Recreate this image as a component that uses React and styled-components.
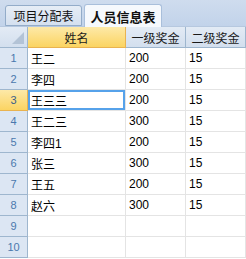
import styled, { createGlobalStyle } from 'styled-components';

const GlobalStyle = createGlobalStyle`
    html, body {
        margin: 0;
        padding: 0;
        background: #ffffff;
    }
    * {
        box-sizing: border-box;
    }
`;

const rows = [
    { name: '王二', a: '200', b: '15' },
    { name: '李四', a: '200', b: '15' },
    { name: '王三三', a: '200', b: '15' },
    { name: '王二三', a: '300', b: '15' },
    { name: '李四1', a: '200', b: '15' },
    { name: '张三', a: '300', b: '15' },
    { name: '王五', a: '200', b: '15' },
    { name: '赵六', a: '300', b: '15' },
    null,
    null,
];

const SELECTED_ROW = 2;

function App() {
    return (
        <>
            <GlobalStyle />
            <Wrapper>
                <TabBar>
                    <Tab>项目分配表</Tab>
                    <Tab $active>人员信息表</Tab>
                </TabBar>
                <Grid>
                    <Corner>
                        <svg width="12" height="12" viewBox="0 0 12 12">
                            <polygon points="12,0 12,12 0,12" fill="#b3c3d6" />
                        </svg>
                    </Corner>
                    <ColHeader $selected>姓名</ColHeader>
                    <ColHeader>一级奖金</ColHeader>
                    <ColHeader>二级奖金</ColHeader>

                    {rows.map((row, index) => (
                        <Row key={index}>
                            <RowHeader $selected={index === SELECTED_ROW}>{index + 1}</RowHeader>
                            <Cell $active={index === SELECTED_ROW}>{row ? row.name : ''}</Cell>
                            <Cell>{row ? row.a : ''}</Cell>
                            <Cell>{row ? row.b : ''}</Cell>
                        </Row>
                    ))}
                </Grid>
            </Wrapper>
        </>
    );
}

export default App;

const Wrapper = styled.div`
    width: 246px;
    height: 259px;
    overflow: hidden;
    font-family: "Liberation Sans", "Noto Sans CJK SC", sans-serif;
    background: #ffffff;
`;

const TabBar = styled.div`
    height: 27px;
    display: flex;
    align-items: flex-end;
    gap: 2px;
    padding-left: 5px;
    background: linear-gradient(#cfdcee, #c2d3ea);
    border-bottom: 1px solid #b6c8df;
`;

const Tab = styled.div`
    height: ${p => (p.$active ? '23px' : '21px')};
    width: ${p => (p.$active ? '78px' : '77px')};
    margin-bottom: ${p => (p.$active ? '-1px' : '0')};
    display: flex;
    align-items: center;
    justify-content: center;
    font-size: ${p => (p.$active ? '13px' : '12px')};
    font-weight: ${p => (p.$active ? 700 : 400)};
    color: #111;
    background: ${p => (p.$active ? '#f6f9fd' : 'linear-gradient(#e6edf6, #d4e0ef)')};
    border: 1px solid ${p => (p.$active ? '#a9bfdb' : '#93acc9')};
    border-bottom: ${p => (p.$active ? 'none' : '1px solid #93acc9')};
    border-radius: 3px 3px 0 0;
`;

const Grid = styled.div`
    display: grid;
    grid-template-columns: 28px 98px 60px 60px;
    grid-auto-rows: 21px;
`;

const Row = styled.div`
    display: contents;
`;

const Corner = styled.div`
    display: flex;
    align-items: flex-end;
    justify-content: flex-end;
    padding: 0 3px 3px 0;
    background: linear-gradient(#e3ebf5, #d3dfee);
    border-right: 1px solid #9eb6ce;
    border-bottom: 1px solid #9eb6ce;
`;

const ColHeader = styled.div`
    display: flex;
    align-items: center;
    justify-content: center;
    font-size: 12px;
    color: #1a1a1a;
    background: ${p => (p.$selected ? 'linear-gradient(#fde9a8, #fbd462)' : 'linear-gradient(#e3ebf5, #d3dfee)')};
    border-right: 1px solid ${p => (p.$selected ? '#e9b350' : '#9eb6ce')};
    border-bottom: 1px solid ${p => (p.$selected ? '#e9b350' : '#9eb6ce')};
`;

const RowHeader = styled.div`
    display: flex;
    align-items: center;
    justify-content: center;
    font-size: 11px;
    color: ${p => (p.$selected ? '#3b5f8a' : '#4a78ad')};
    background: ${p => (p.$selected ? 'linear-gradient(#fde9a8, #fbd462)' : '#dce6f3')};
    border-right: 1px solid ${p => (p.$selected ? '#e9b350' : '#9eb6ce')};
    border-bottom: 1px solid ${p => (p.$selected ? '#e9b350' : '#9eb6ce')};
`;

const Cell = styled.div`
    display: flex;
    align-items: center;
    padding-left: 3px;
    font-size: 12px;
    color: #000;
    white-space: nowrap;
    overflow: hidden;
    border-right: 1px solid #e4e4e4;
    border-bottom: 1px solid #e4e4e4;
    box-shadow: ${p => (p.$active ? 'inset 0 0 0 2px #56a2ea' : 'none')};
`;
